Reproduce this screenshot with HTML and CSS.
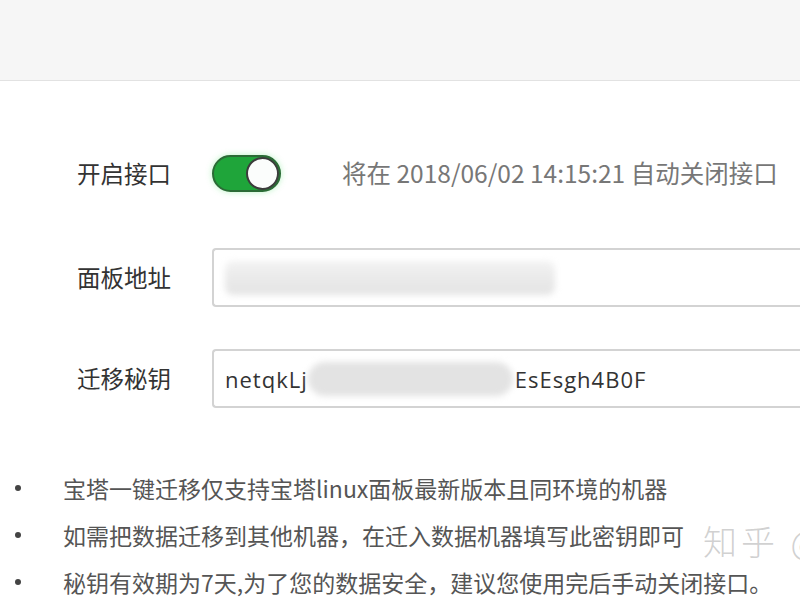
FILE: index.html
```html
<!DOCTYPE html>
<html lang="zh-CN">
<head>
<meta charset="utf-8">
<title>一键迁移</title>
<link rel="stylesheet" href="styles.css">
</head>
<body>
<div class="topbar"></div>
<div class="form">
  <div class="row row-switch">
    <div class="label">开启接口</div>
    <div class="switch"><span class="knob"></span></div>
    <div class="status">将在 2018/06/02 14:15:21 自动关闭接口</div>
  </div>
  <div class="row row-addr">
    <div class="label">面板地址</div>
    <div class="field"><span class="blur blur-addr"></span></div>
  </div>
  <div class="row row-key">
    <div class="label">迁移秘钥</div>
    <div class="field"><span class="key">netqkLj</span><span class="blur blur-key"></span><span class="key">EsEsgh4B0F</span></div>
  </div>
</div>
<ul class="tips">
  <li>宝塔一键迁移仅支持宝塔linux面板最新版本且同环境的机器</li>
  <li>如需把数据迁移到其他机器，在迁入数据机器填写此密钥即可</li>
  <li>秘钥有效期为7天,为了您的数据安全，建议您使用完后手动关闭接口。</li>
  <span class="watermark">知乎 @</span>
</ul>
</body>
</html>
```
FILE: styles.css
```css
html, body {
  margin: 0;
  padding: 0;
  background: #fff;
  overflow: hidden;
  width: 800px;
  height: 600px;
  font-family: "Noto Sans CJK SC", "Noto Sans", sans-serif;
}
.topbar {
  height: 80px;
  background: #f6f6f6;
  border-bottom: 1px solid #e2e2e2;
}
.form {
  padding-top: 74px;
  display: flex;
  flex-direction: column;
}
.row {
  display: flex;
  align-items: center;
}
.label {
  width: 212px;
  padding-left: 77px;
  box-sizing: border-box;
  flex: none;
  font-size: 23.5px;
  color: #333;
  line-height: 1;
  white-space: nowrap;
}
.row-switch {
  height: 37px;
}
.row-addr {
  margin-top: 56px;
}
.row-key {
  margin-top: 42px;
}
.switch {
  width: 69px;
  height: 37px;
  box-sizing: border-box;
  border-radius: 19px;
  background: #1fa53a;
  border: 2px solid #2b6b36;
  display: flex;
  align-items: center;
  justify-content: flex-end;
  padding-right: 0;
  box-shadow: 0 0 6px rgba(60, 220, 90, 0.35);
  flex: none;
}
.knob {
  width: 33px;
  height: 33px;
  box-sizing: border-box;
  border-radius: 50%;
  background: #fbfdfc;
  border: 2px solid #3c3c3c;
}
.status {
  margin-left: 61px;
  font-size: 24.5px;
  color: #777;
  line-height: 1;
  white-space: nowrap;
}
.field {
  flex: 1;
  height: 59px;
  box-sizing: border-box;
  border: 2px solid #d3d3d3;
  border-right: none;
  border-radius: 4px 0 0 4px;
  display: flex;
  align-items: center;
  padding-left: 11px;
  margin-right: -10px;
}
.key {
  font-family: "Open Sans", "Noto Sans", sans-serif;
  font-size: 22px;
  color: #333;
  letter-spacing: 1px;
}
.blur {
  display: inline-block;
  background: #e3e3e3;
  filter: blur(3px);
}
.blur-addr {
  width: 330px;
  height: 34px;
  border-radius: 8px;
  background: linear-gradient(180deg, #f3f3f3 0%, #ebebeb 45%, #e4e4e4 100%);
}
.blur-key {
  width: 205px;
  height: 34px;
  border-radius: 17px;
  margin: 0 2px 0 0;
}
.tips {
  list-style: none;
  margin: 57px 0 0;
  padding: 0;
  position: relative;
}
.tips li {
  position: relative;
  padding-left: 63px;
  font-size: 23px;
  line-height: 26px;
  height: 26px;
  padding-top: 10px;
  padding-bottom: 11px;
  color: #555;
  white-space: nowrap;
}
.tips li::before {
  content: "";
  position: absolute;
  left: 15px;
  top: 20px;
  width: 6px;
  height: 6px;
  border-radius: 50%;
  background: #444;
}
.watermark {
  position: absolute;
  left: 703px;
  top: 59px;
  font-size: 34px;
  line-height: 1;
  color: rgba(170, 170, 170, 0.55);
  font-weight: 300;
  letter-spacing: 4px;
  white-space: nowrap;
}
```
